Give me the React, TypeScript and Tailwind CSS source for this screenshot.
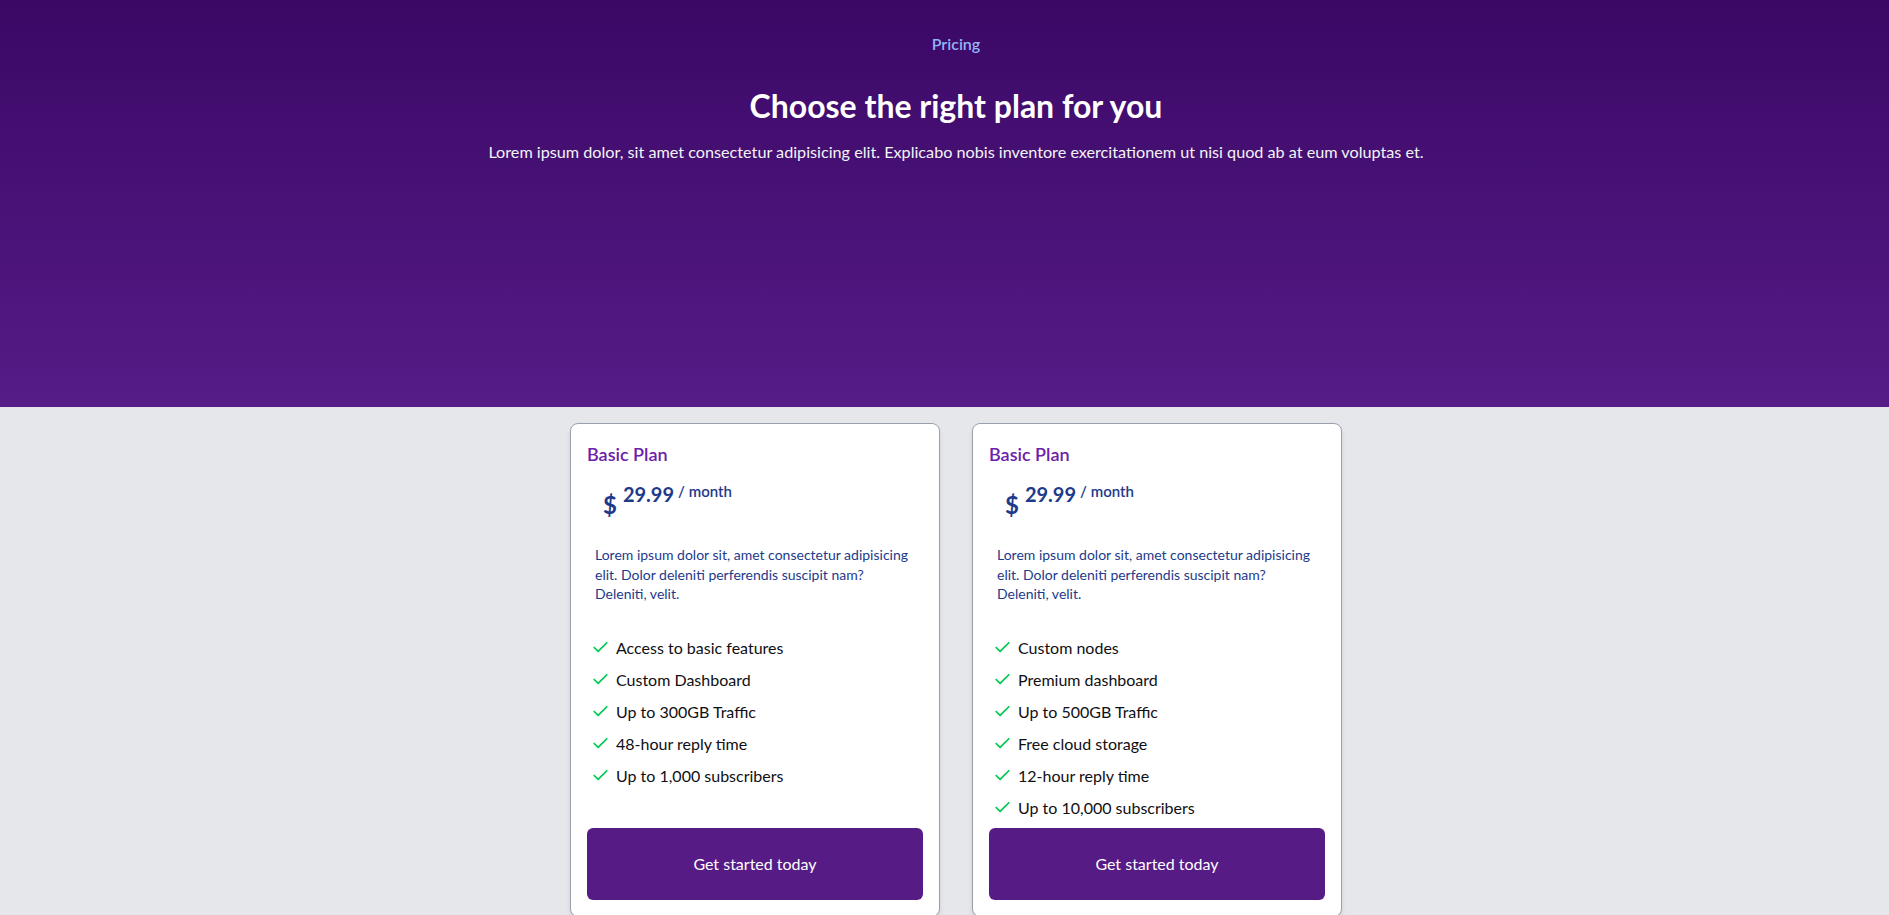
import React from 'react';
import { Check } from 'lucide-react';

type Plan = {
  name: string;
  price: string;
  description: string;
  features: string[];
};

const plans: Plan[] = [
  {
    name: 'Basic Plan',
    price: '29.99',
    description:
      'Lorem ipsum dolor sit, amet consectetur adipisicing elit. Dolor deleniti perferendis suscipit nam? Deleniti, velit.',
    features: [
      'Access to basic features',
      'Custom Dashboard',
      'Up to 300GB Traffic',
      '48-hour reply time',
      'Up to 1,000 subscribers',
    ],
  },
  {
    name: 'Basic Plan',
    price: '29.99',
    description:
      'Lorem ipsum dolor sit, amet consectetur adipisicing elit. Dolor deleniti perferendis suscipit nam? Deleniti, velit.',
    features: [
      'Custom nodes',
      'Premium dashboard',
      'Up to 500GB Traffic',
      'Free cloud storage',
      '12-hour reply time',
      'Up to 10,000 subscribers',
    ],
  },
];

const PlanCard: React.FC<{ plan: Plan }> = ({ plan }) => (
  <div className="w-[370px] bg-white border border-gray-400 rounded-lg shadow-md p-4 flex flex-col">
    <h3 className="text-lg font-semibold text-[#6b21a8] leading-7">{plan.name}</h3>

    {/* price */}
    <div className="flex items-start gap-1 px-4 mt-3 text-[#1e3a8a]">
      <span className="text-2xl font-bold mt-[9px] mr-0.5">$</span>
      <span className="text-xl font-bold">{plan.price}</span>
      <span className="text-[15px] font-semibold">/ month</span>
    </div>

    <p className="mt-6 px-2 text-[14px] leading-[19.5px] text-[#1e3a8a]">{plan.description}</p>

    <ul className="mt-[28px] pl-1 flex-1">
      {plan.features.map((f) => (
        <li key={f} className="h-8 flex items-center gap-1.5 text-[16px] text-[#0f0f14]">
          <Check size={19} strokeWidth={2.2} className="text-green-500 shrink-0" />
          <span>{f}</span>
        </li>
      ))}
    </ul>

    <button className="mt-1 h-[72px] w-full rounded-md bg-[#561b85] text-white text-[16px]">
      Get started today
    </button>
  </div>
);

export default function App() {
  return (
    <div className="min-h-screen bg-gray-200 font-['Lato','Liberation_Sans',sans-serif]">
      <header className="h-[407px] bg-gradient-to-b from-[#3b0866] to-[#561b87] pt-8 text-center pl-[23px]">
        <p className="text-base font-semibold text-[#93b4f5]">Pricing</p>
        <h1 className="mt-8 text-[32px] leading-9 font-bold text-white">Choose the right plan for you</h1>
        <p className="mt-4 text-[16.2px] leading-6 text-gray-100">
          Lorem ipsum dolor, sit amet consectetur adipisicing elit. Explicabo nobis inventore exercitationem ut nisi quod ab at eum voluptas et.
        </p>
      </header>

      <main className="mt-4 flex justify-center items-stretch gap-8 pl-[23px]">
        {plans.map((p, i) => (
          <PlanCard key={i} plan={p} />
        ))}
      </main>
    </div>
  );
}
